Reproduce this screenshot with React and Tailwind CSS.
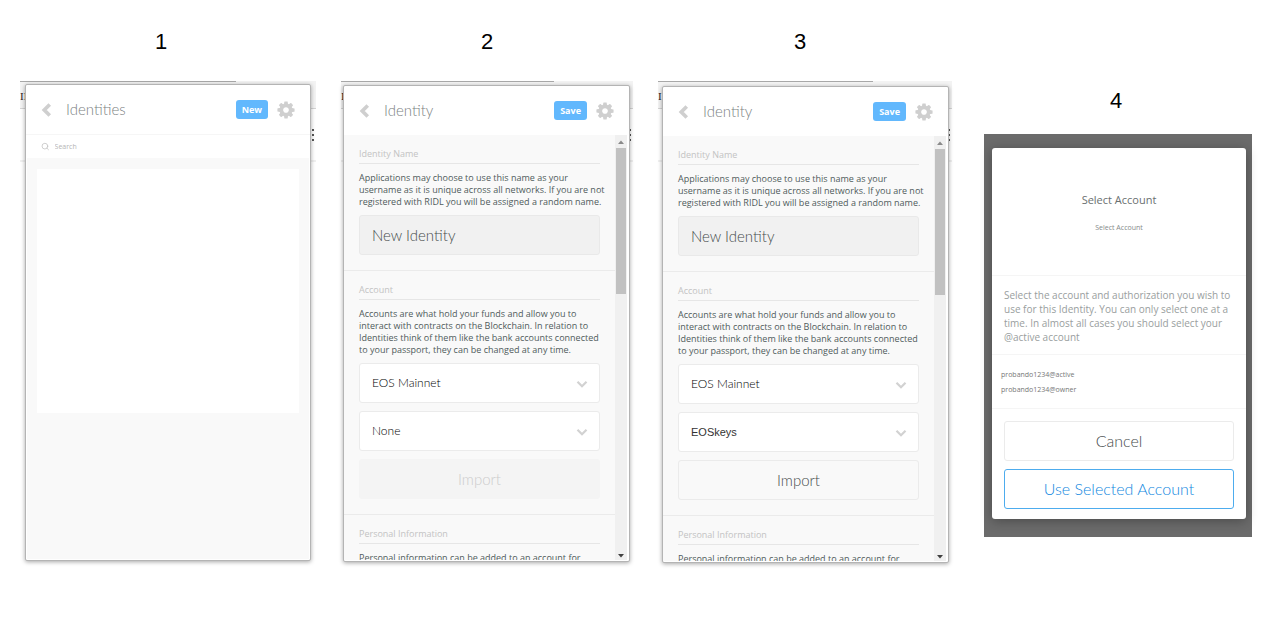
import { ChevronDown, ChevronLeft, Search } from "lucide-react";

const heading = "font-['Lato'] font-light";

function GearIcon({ className }) {
  return (
    <svg viewBox="0 0 1792 1792" fill="currentColor" className={className} aria-hidden="true">
      <path d="M1152 896q0-106-75-181t-181-75-181 75-75 181 75 181 181 75 181-75 75-181zm512-109v222q0 12-8 23t-20 13l-185 28q-19 54-39 91 35 50 107 138 10 12 10 25t-9 23q-27 37-99 108t-94 71q-12 0-26-9l-138-108q-44 23-91 38-16 136-29 186-7 28-36 28h-222q-14 0-24.500-8.500t-11.500-21.500l-28-184q-49-16-90-37l-141 107q-10 9-25 9-14 0-25-11-126-114-165-168-7-10-7-23 0-12 8-23 15-21 51-66.500t54-70.500q-27-50-41-99l-183-27q-13-2-21-12.500t-8-23.500v-222q0-12 8-23t19-13l186-28q14-46 39-92-40-57-107-138-10-12-10-24 0-10 9-23 26-36 98.500-107.500t94.500-71.500q13 0 26 10l138 107q44-23 91-38 16-136 29-186 7-28 36-28h222q14 0 24.500 8.500t11.500 21.500l28 184q49 16 90 37l142-107q9-9 24-9 13 0 25 10 129 119 165 170 7 8 7 22 0 12-8 23-15 21-51 66.500t-54 70.500q26 50 41 98l183 28q13 2 21 12.500t8 23.500z" />
    </svg>
  );
}

// Slice of the browser window that shows behind each popup
function BrowserEdge({ glyphs }) {
  return (
    <div className="absolute inset-x-0 top-0 overflow-hidden" aria-hidden="true">
      <div className="flex h-7 items-center justify-between border-b border-[#d4d4d4] bg-[#f3f3f3] pt-1 font-['Liberation_Serif'] text-[11px] text-[#2b1a24]">
        <span>{glyphs}</span>
      </div>
      <div className="flex h-[53px] flex-col items-end justify-center gap-[3px] border-b-2 border-[#f0f0f0] pr-[2px]">
        <i className="size-[2px] bg-[#555]" />
        <i className="size-[2px] bg-[#555]" />
        <i className="size-[2px] bg-[#555]" />
      </div>
      <div className="absolute left-0 top-0 h-px w-[73%] bg-[#a8a8a8]" />
    </div>
  );
}

function Step({ number, captionClass, frameClass, glyphs, children }) {
  return (
    <figure className="min-w-0">
      <figcaption
        className={`mb-[25px] text-center font-['Liberation_Sans_Narrow','Liberation_Sans',sans-serif] text-[22px] leading-7 text-black ${captionClass}`}
      >
        {number}
      </figcaption>
      <div className={`relative ${frameClass}`}>
        {glyphs && <BrowserEdge glyphs={glyphs} />}
        {children}
      </div>
    </figure>
  );
}

function Popup({ title, action, children }) {
  return (
    <section className="relative flex h-[477px] flex-col overflow-hidden rounded-xs border border-[#b4b4b4] bg-white shadow-[0_1px_4px_rgba(0,0,0,0.35)]">
      <header className="flex h-[49px] shrink-0 items-center pl-[10px] pr-[14px]">
        <button type="button" aria-label="Back" className="text-[#cfcfcf]">
          <ChevronLeft size={22} strokeWidth={4} strokeLinecap="butt" strokeLinejoin="miter" />
        </button>
        <h2 className={`ml-2 flex-1 text-[15px] text-[#7c8282] ${heading}`}>{title}</h2>
        <button
          type="button"
          className="h-[19px] rounded-[3px] bg-[#62b8fd] px-[6px] text-[9px] font-bold text-white"
        >
          {action}
        </button>
        <button type="button" aria-label="Settings" className="ml-2 text-[#cfcfcf]">
          <GearIcon className="size-5" />
        </button>
      </header>
      {children}
    </section>
  );
}

function Section({ title, text, children }) {
  return (
    <section className="border-b border-[#ebebeb] px-[15px] pb-[15px] pt-[13px]">
      <h3 className="border-b border-[#e6e6e6] pb-[3px] text-[9px] leading-3 text-[#c3c3c3]">
        {title}
      </h3>
      <p className="-mr-[7px] mt-2 text-[9px] leading-3 text-[#4f5b5b]">{text}</p>
      <div className="mt-[7px] space-y-2">{children}</div>
    </section>
  );
}

function Dropdown({ label, value, textClass }) {
  return (
    <div className="relative">
      <select
        aria-label={label}
        defaultValue={value}
        className={`block h-10 w-full appearance-none rounded-[3px] border border-[#ebebeb] bg-white px-3 ${textClass}`}
      >
        <option>{value}</option>
      </select>
      <ChevronDown
        size={18}
        strokeWidth={3}
        strokeLinecap="butt"
        strokeLinejoin="miter"
        className="pointer-events-none absolute right-[9px] top-3 text-[#d2d2d2]"
      />
    </div>
  );
}

function ScrollBar() {
  return (
    <div className="flex w-3 shrink-0 flex-col items-center bg-[#f0f0f0]" aria-hidden="true">
      <svg viewBox="0 0 12 13" className="h-[13px] w-3" fill="#8a8a8a">
        <path d="M3 9l3-3.500 3 3.500z" />
      </svg>
      <div className="h-[146px] w-[10px] bg-[#c1c1c1]" />
      <svg viewBox="0 0 12 13" className="mt-auto h-[13px] w-3" fill="#404040">
        <path d="M3 7h6l-3 3.500z" />
      </svg>
    </div>
  );
}

function IdentityForm({ account, accountClass, canImport }) {
  return (
    <Popup title="Identity" action="Save">
      <div className="mb-px mr-[2px] flex min-h-0 flex-1 bg-[#f9f9f9]">
        <div className="min-w-0 flex-1 overflow-hidden">
          <Section
            title="Identity Name"
            text="Applications may choose to use this name as your username as it is unique across all networks. If you are not registered with RIDL you will be assigned a random name."
          >
            <input
              type="text"
              aria-label="Identity Name"
              defaultValue="New Identity"
              className={`block h-10 w-full rounded-[3px] border border-[#e9e9e9] bg-[#f1f1f1] px-3 text-[15px] text-[#464c4c] ${heading}`}
            />
          </Section>
          <Section
            title="Account"
            text="Accounts are what hold your funds and allow you to interact with contracts on the Blockchain. In relation to Identities think of them like the bank accounts connected to your passport, they can be changed at any time."
          >
            <Dropdown
              label="Network"
              value="EOS Mainnet"
              textClass="font-['Lato'] text-[12px] font-light text-black"
            />
            <Dropdown label="Account" value={account} textClass={accountClass} />
            <button
              type="button"
              disabled={!canImport}
              className={`block h-10 w-full rounded-[3px] border text-[15px] ${heading} ${
                canImport
                  ? "border-[#ebebeb] bg-[#f9f9f9] text-[#464c4c]"
                  : "border-[#f4f4f4] bg-[#f4f4f4] text-[#cccccc]"
              }`}
            >
              Import
            </button>
          </Section>
          <Section
            title="Personal Information"
            text="Personal information can be added to an account for"
          />
        </div>
        <ScrollBar />
      </div>
    </Popup>
  );
}

function IdentityList() {
  return (
    <Popup title="Identities" action="New">
      <label className="flex h-6 shrink-0 items-center gap-[5px] border-t border-[#f6f6f6] pl-[15px]">
        <Search size={9} className="text-[#bdbdbd]" />
        <input
          type="search"
          aria-label="Search"
          placeholder="Search"
          className="w-full text-[7px] leading-3 placeholder:text-[#b5b5b5]"
        />
      </label>
      <div className="mx-px mb-px flex-1 bg-[#f9f9f9] px-[10px] pt-[11px]">
        <div className="h-[244px] bg-white" />
      </div>
    </Popup>
  );
}

function AccountDialog() {
  return (
    <div className="bg-[#6b6b6b] pb-[18px] pl-2 pr-[6px] pt-[14px]">
      <section className="rounded-[3px] bg-white shadow-[0_2px_12px_rgba(0,0,0,0.3)]">
        <header className="h-[128px] border-b border-[#f5f5f5] pt-11 text-center">
          <h2 className="text-[11px] leading-4 text-[#6a7070]">Select Account</h2>
          <p className="mt-[14px] text-[7px] leading-3 text-[#858a8a]">Select Account</p>
        </header>
        <p className="border-b border-[#f5f5f5] px-3 pb-[10px] pt-3 text-[10px] leading-[14px] text-[#999e9e]">
          Select the account and authorization you wish to use for this Identity. You can only
          select one at a time. In almost all cases you should select your @active account
        </p>
        <ul className="border-b border-[#f5f5f5] px-[9px] pb-[11px] pt-3 text-[7px] leading-[15px] text-[#777]">
          <li>probando1234@active</li>
          <li>probando1234@owner</li>
        </ul>
        <div className="space-y-2 px-3 pb-[10px] pt-3">
          <button
            type="button"
            className={`block h-10 w-full rounded-[3px] border border-[#ebebeb] text-base text-[#464c4c] ${heading}`}
          >
            Cancel
          </button>
          <button
            type="button"
            className={`block h-10 w-full rounded-[3px] border border-[#4dacee] text-base text-[#1088e0] ${heading}`}
          >
            Use Selected Account
          </button>
        </div>
      </section>
    </div>
  );
}

export default function App() {
  return (
    <main className="grid min-h-screen grid-cols-[296fr_292fr_294fr_275fr] items-start gap-x-[25px] bg-white pl-5 pr-7 pt-7 font-['Open_Sans',sans-serif]">
      <Step number="1" glyphs="II" captionClass="pr-[14px]" frameClass="px-[5px] pt-[3px]">
        <IdentityList />
      </Step>
      <Step number="2" glyphs="I" captionClass="" frameClass="pl-[2px] pr-[3px] pt-1">
        <IdentityForm
          account="None"
          accountClass="font-['Lato'] text-[12px] font-light text-black"
          canImport={false}
        />
      </Step>
      <Step number="3" glyphs="II" captionClass="pr-[10px]" frameClass="pl-1 pr-[3px] pt-[5px]">
        <IdentityForm
          account="EOSkeys"
          accountClass="font-['Liberation_Sans'] text-[11px] text-[#333]"
          canImport
        />
      </Step>
      <div className="pl-[7px] pt-[59px]">
        <Step number="4" captionClass="pr-1" frameClass="-mt-[6px]">
          <AccountDialog />
        </Step>
      </div>
    </main>
  );
}
